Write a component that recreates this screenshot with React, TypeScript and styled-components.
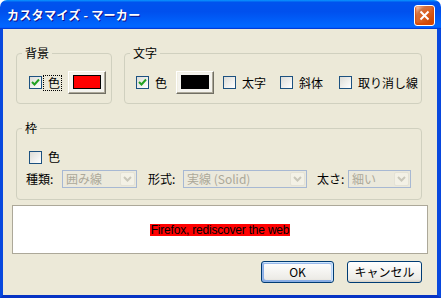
import React from "react";
import styled, { createGlobalStyle } from "styled-components";

const GlobalStyle = createGlobalStyle`
  html, body {
    margin: 0;
    padding: 0;
    background: #ffffff;
  }
  * {
    box-sizing: border-box;
  }
`;

const uiFont = `"Noto Sans CJK JP", "Liberation Sans", sans-serif`;

const Window = styled.div`
  width: 441px;
  height: 298px;
  display: flex;
  flex-direction: column;
  font-family: ${uiFont};
  font-size: 12px;
  line-height: 14px;
  color: #000;
`;

const TitleBar = styled.div`
  height: 29px;
  flex: none;
  display: flex;
  align-items: center;
  justify-content: space-between;
  padding: 1px 6px 0 7px;
  border-radius: 7px 7px 0 0;
  background: linear-gradient(
    180deg,
    #0997ff,
    #0053ee 8%,
    #0050ee 40%,
    #0066ff 88%,
    #0066ff 93%,
    #005bff 95%,
    #003dd7 96%,
    #003dd7
  );
`;

const Title = styled.span`
  color: #fff;
  font-weight: bold;
  font-size: 12px;
  letter-spacing: 0.3px;
  text-shadow: 1px 1px #0f1089;
  white-space: pre;
`;

const CloseButton = styled.div`
  width: 21px;
  height: 21px;
  border: 1px solid #fff;
  border-radius: 3px;
  display: flex;
  align-items: center;
  justify-content: center;
  background: radial-gradient(
    circle at 85% 85%,
    #cc4600 0%,
    #dc6527 55%,
    #cd7546 70%,
    #ffccb2 90%,
    #fff 100%
  );
  box-shadow: inset 0 -1px 2px 1px #da4600;
`;

const Client = styled.div`
  flex: 1;
  min-height: 0;
  display: flex;
  flex-direction: column;
  background: #ece9d8;
  border-left: 3px solid #0848de;
  border-right: 4px solid #0848de;
  border-bottom: 3px solid #0633c4;
  padding: 17px 9px 0 9px;
`;

const TopRow = styled.div`
  display: flex;
  flex: none;
  gap: 12px;
  margin: 0 6px 0 4px;
`;

const Group = styled.fieldset<{ $width?: number }>`
  margin: 0;
  min-width: 0;
  height: 58px;
  border: 1px solid #d0d0bf;
  border-radius: 4px;
  padding: 0;
  ${(p) => (p.$width ? `width: ${p.$width}px; flex: none;` : `flex: 1;`)}
`;

const Legend = styled.legend`
  margin-left: 5px;
  padding: 0 3px;
  line-height: 14px;
  font-size: 12px;
`;

const Row = styled.div<{ $pad: number }>`
  display: flex;
  align-items: center;
  height: 23px;
  margin-top: 11px;
  padding-left: ${(p) => p.$pad}px;
`;

const CheckBox = styled.span`
  width: 13px;
  height: 13px;
  flex: none;
  border: 1px solid #1c5180;
  background: linear-gradient(135deg, #dcdcd7, #ffffff);
  display: flex;
  align-items: center;
  justify-content: center;
`;

const CheckLabel = styled.span<{ $focus?: boolean; $gap?: number }>`
  flex: none;
  white-space: nowrap;
  margin-left: 2px;
  padding: 0 1px 0 4px;
  line-height: 14px;
  margin-right: ${(p) => p.$gap ?? 0}px;
  outline: ${(p) => (p.$focus ? "1px dotted #000" : "none")};
  outline-offset: 0;
`;

const ColorButton = styled.div`
  width: 38px;
  height: 23px;
  flex: none;
  display: flex;
  align-items: center;
  justify-content: center;
  padding-bottom: 1px;
  background: #f4f3ee;
  border: 1px solid;
  border-color: #fff #716f64 #716f64 #fff;
  box-shadow: inset -1px -1px #aca899, inset 1px 1px #f1efe2;
  margin-right: 9px;
`;

const Swatch = styled.span<{ $color: string }>`
  width: 28px;
  height: 14px;
  border: 1px solid #000;
  background: ${(p) => p.$color};
`;

const BorderGroup = styled(Group)`
  flex: none;
  height: 79px;
  margin: 17px 6px 0 4px;
`;

const BorderBody = styled.div`
  display: flex;
  flex-direction: column;
  gap: 5px;
  padding-top: 14px;
`;

const CheckRow = styled.div`
  display: flex;
  align-items: center;
  height: 16px;
  padding-left: 12px;
`;

const ComboRow = styled.div`
  display: flex;
  align-items: center;
  height: 18px;
  padding-left: 9px;
`;

const FieldLabel = styled.span<{ $w: number }>`
  width: ${(p) => p.$w}px;
  flex: none;
  white-space: nowrap;
`;

const Combo = styled.div<{ $w: number; $gap?: number }>`
  width: ${(p) => p.$w}px;
  height: 18px;
  flex: none;
  display: flex;
  align-items: center;
  justify-content: space-between;
  border: 1px solid #a7b8d3;
  background: #ebe9dc;
  color: #aca899;
  padding: 0 1px 0 3px;
  margin-right: ${(p) => p.$gap ?? 11}px;
  white-space: nowrap;
  overflow: hidden;
`;

const ComboArrow = styled.span`
  width: 15px;
  height: 14px;
  flex: none;
  display: flex;
  align-items: center;
  justify-content: center;
  background: #f3f1e6;
  border: 1px solid #e4e2d6;
  border-radius: 2px;
`;

const Preview = styled.div`
  flex: none;
  margin-top: 5px;
  height: 49px;
  border: 1px solid #aca899;
  background: #fff;
  display: flex;
  align-items: center;
  justify-content: center;
`;

const Sample = styled.span`
  font-family: "Liberation Sans", Arial, sans-serif;
  font-size: 12px;
  letter-spacing: -0.2px;
  line-height: 12px;
  background: #ff0000;
  color: #000;
  padding: 0 1px;
`;

const ButtonRow = styled.div`
  flex: none;
  display: flex;
  justify-content: flex-end;
  gap: 13px;
  margin: 7px 6px 0 0;
`;

const Button = styled.div<{ $w: number; $default?: boolean }>`
  width: ${(p) => p.$w}px;
  height: 22px;
  border: 1px solid #003c74;
  border-radius: 3px;
  display: flex;
  align-items: center;
  justify-content: center;
  background: linear-gradient(180deg, #fff, #ecebe6 86%, #d6d0c5);
  box-shadow: ${(p) =>
    p.$default
      ? "inset -1px 1px #cee7ff, inset 1px 2px #98b8ea, inset -2px 2px #bcd4f6, inset 1px -1px #89ade4, inset 2px -2px #89ade4"
      : "none"};
`;

const Check = () => (
  <svg width="9" height="9" viewBox="0 0 9 9">
    <path d="M1 4 L3.5 6.5 L8 1.5" stroke="#21a121" strokeWidth="2" fill="none" />
  </svg>
);

const Chevron = () => (
  <svg width="9" height="6" viewBox="0 0 9 6">
    <path d="M1 1 L4.5 4.5 L8 1" stroke="#c9c7ba" strokeWidth="2" fill="none" />
  </svg>
);

const CloseX = () => (
  <svg width="11" height="11" viewBox="0 0 11 11">
    <path d="M1.5 1.5 L9.5 9.5 M9.5 1.5 L1.5 9.5" stroke="#fff" strokeWidth="2" />
  </svg>
);

const App = () => {
  return (
    <>
      <GlobalStyle />
      <Window>
        <TitleBar>
          <Title>カスタマイズ - マーカー</Title>
          <CloseButton>
            <CloseX />
          </CloseButton>
        </TitleBar>
        <Client>
          <TopRow>
            <Group $width={96}>
              <Legend>背景</Legend>
              <Row $pad={12}>
                <CheckBox>
                  <Check />
                </CheckBox>
                <CheckLabel $focus $gap={7}>
                  色
                </CheckLabel>
                <ColorButton>
                  <Swatch $color="#ff0000" />
                </ColorButton>
              </Row>
            </Group>
            <Group>
              <Legend>文字</Legend>
              <Row $pad={11}>
                <CheckBox>
                  <Check />
                </CheckBox>
                <CheckLabel $gap={8}>色</CheckLabel>
                <ColorButton>
                  <Swatch $color="#000000" />
                </ColorButton>
                <CheckBox />
                <CheckLabel $gap={13}>太字</CheckLabel>
                <CheckBox />
                <CheckLabel $gap={15}>斜体</CheckLabel>
                <CheckBox />
                <CheckLabel>取り消し線</CheckLabel>
              </Row>
            </Group>
          </TopRow>
          <BorderGroup>
            <Legend>枠</Legend>
            <BorderBody>
              <CheckRow>
                <CheckBox />
                <CheckLabel>色</CheckLabel>
              </CheckRow>
              <ComboRow>
                <FieldLabel $w={36}>種類:</FieldLabel>
                <Combo $w={75}>
                  囲み線
                  <ComboArrow>
                    <Chevron />
                  </ComboArrow>
                </Combo>
                <FieldLabel $w={35}>形式:</FieldLabel>
                <Combo $w={124} $gap={10}>
                  実線 (Solid)
                  <ComboArrow>
                    <Chevron />
                  </ComboArrow>
                </Combo>
                <FieldLabel $w={31}>太さ:</FieldLabel>
                <Combo $w={63}>
                  細い
                  <ComboArrow>
                    <Chevron />
                  </ComboArrow>
                </Combo>
              </ComboRow>
            </BorderBody>
          </BorderGroup>
          <Preview>
            <Sample>Firefox, rediscover the web</Sample>
          </Preview>
          <ButtonRow>
            <Button $w={73} $default>
              OK
            </Button>
            <Button $w={75}>キャンセル</Button>
          </ButtonRow>
        </Client>
      </Window>
    </>
  );
};

export default App;
